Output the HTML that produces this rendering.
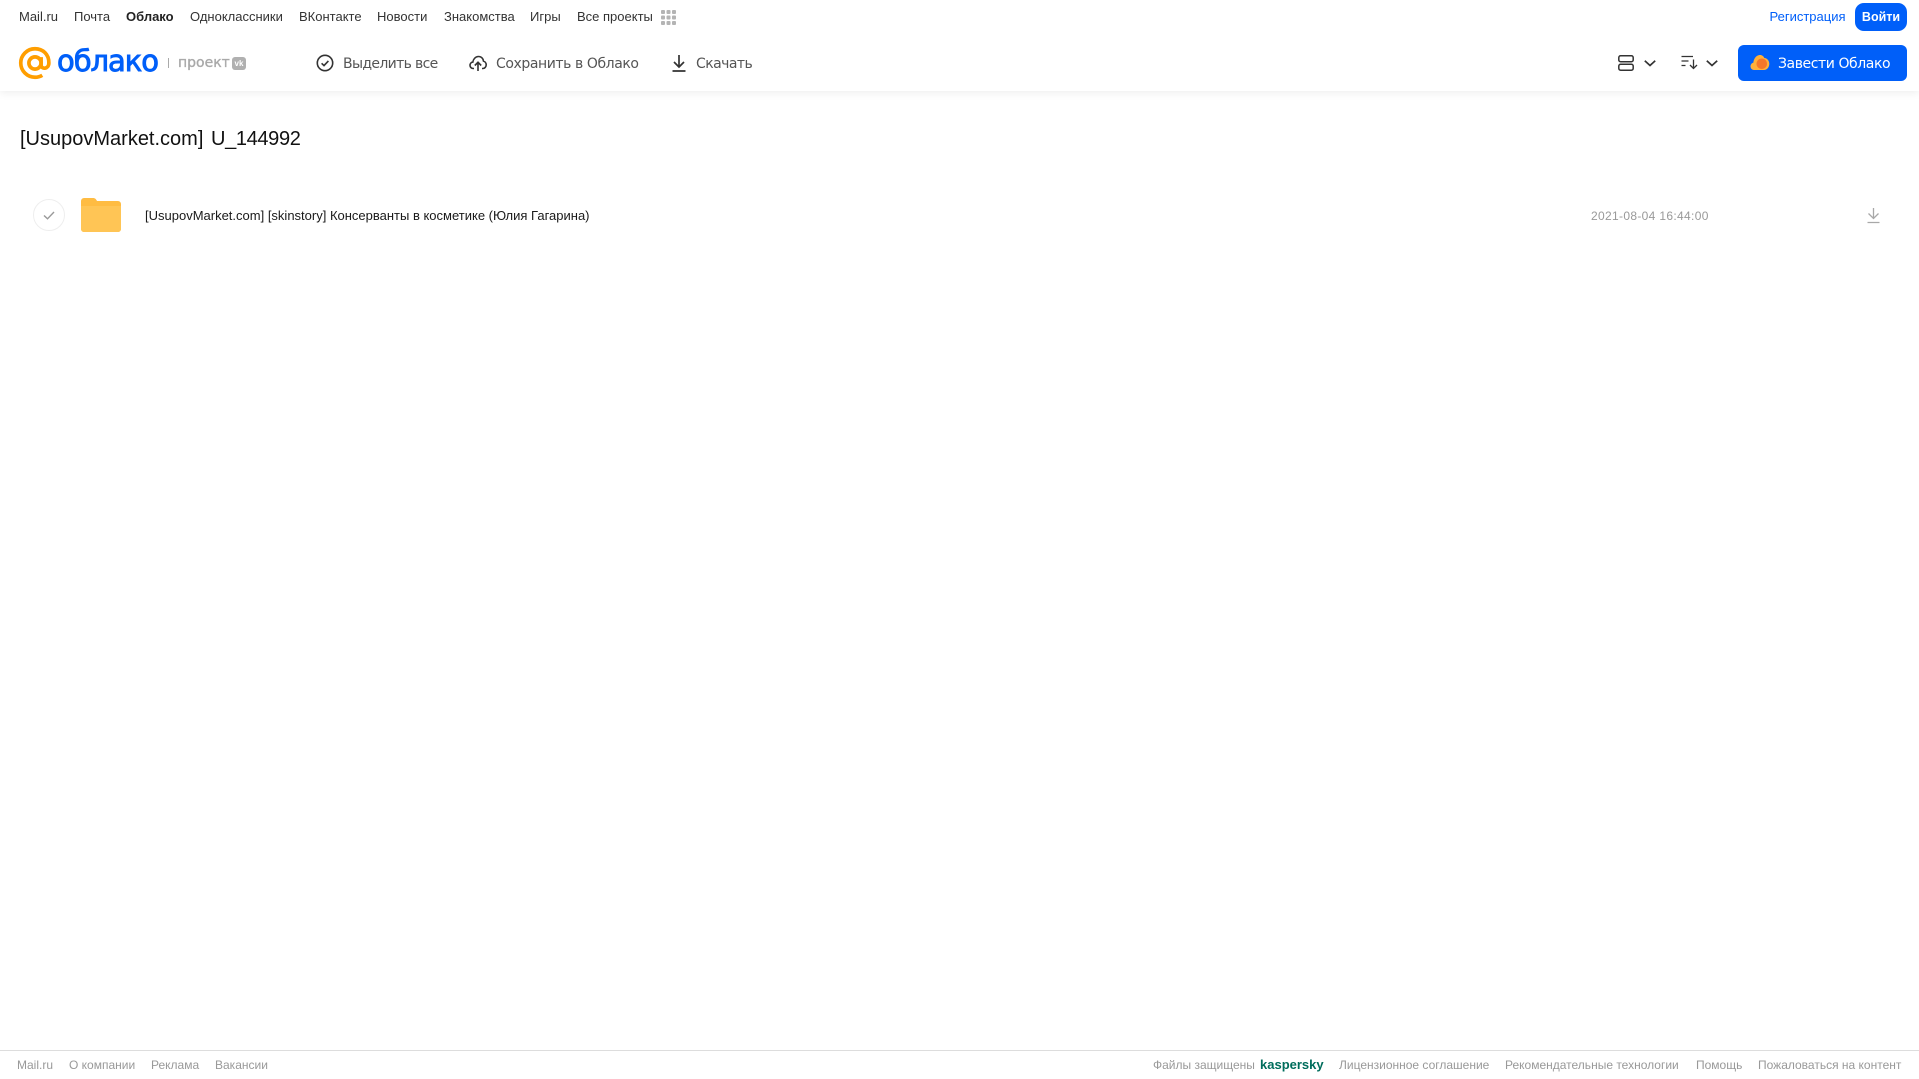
<!DOCTYPE html>
<html lang="ru"><head><meta charset="utf-8"><title>Облако</title>
<style>
html,body{margin:0;padding:0;background:#fff}
body{position:relative;width:1919px;height:1079px;overflow:hidden;font-family:"Liberation Sans",Arial,sans-serif}
.t{position:absolute;white-space:nowrap;line-height:20px;height:20px}
.n{font-size:13px;top:7px;color:#333}
.b{top:54px;color:#555;font-family:"DejaVu Sans","Liberation Sans",sans-serif;letter-spacing:-.55px;font-size:14px}
.f{font-size:12px;top:1055px;color:#999}
svg{position:absolute;overflow:visible}
</style></head><body>
<div style="position:absolute;left:0;top:0;width:1919px;height:91px;background:#fff;box-shadow:0 2px 8px rgba(0,0,0,.07)"></div>

<span class="t n" style="left:19px">Mail.ru</span>
<span class="t n" style="left:74px">Почта</span>
<span class="t n" style="left:126px;font-weight:bold;color:#222">Облако</span>
<span class="t n" style="left:190px">Одноклассники</span>
<span class="t n" style="left:299px">ВКонтакте</span>
<span class="t n" style="left:377px">Новости</span>
<span class="t n" style="left:444px">Знакомства</span>
<span class="t n" style="left:530px">Игры</span>
<span class="t n" style="left:577px">Все проекты</span>
<svg style="left:661px;top:10px" width="15" height="15" viewBox="0 0 15 15" fill="#b4b4b4"><rect x="0" y="0" width="4" height="4" rx="1"/><rect x="5.5" y="0" width="4" height="4" rx="1"/><rect x="11" y="0" width="4" height="4" rx="1"/><rect x="0" y="5.5" width="4" height="4" rx="1"/><rect x="5.5" y="5.5" width="4" height="4" rx="1"/><rect x="11" y="5.5" width="4" height="4" rx="1"/><rect x="0" y="11" width="4" height="4" rx="1"/><rect x="5.5" y="11" width="4" height="4" rx="1"/><rect x="11" y="11" width="4" height="4" rx="1"/></svg>

<span class="t n" style="left:1769.5px;color:#005ff9">Регистрация</span>
<div style="position:absolute;left:1855px;top:3px;width:52px;height:28px;border-radius:9px;background:#005ff9;color:#fff;font-size:12.5px;font-weight:bold;line-height:29px;text-align:center">Войти</div>

<!-- logo -->
<svg style="left:19px;top:47px" width="32" height="32" viewBox="0 0 33 33" fill="none" stroke="#ff9e00" stroke-width="3.8"><circle cx="16.5" cy="16.5" r="6.3"/><path d="M22.8 10.5v8.2c0 4.5 7.9 4.5 8-2.2C31 7.5 24.5 1.8 16.5 1.8 8.4 1.8 1.8 8.4 1.8 16.5s6.6 14.700 14.700 14.700c3 0 5.500-.8 7.500-2"/></svg>
<span class="t" style="left:57px;top:45px;height:32px;line-height:32px;font-size:29px;color:#005ff9;font-family:'DejaVu Sans',sans-serif;letter-spacing:-1.05px;-webkit-text-stroke:.9px #005ff9">облако</span>
<div style="position:absolute;left:168px;top:58px;width:1px;height:10px;background:#aaa"></div>
<span class="t" style="left:178px;top:53px;font-size:14px;color:#a9a9a9;font-family:'DejaVu Sans',sans-serif;-webkit-text-stroke:.35px #a9a9a9">проект</span>
<div style="position:absolute;left:232px;top:57px;width:14px;height:13px;border-radius:3px;background:#b0b0b0;color:#fff;font-size:8px;font-weight:bold;line-height:13px;text-align:center">vk</div>

<!-- toolbar -->
<svg style="left:316px;top:54px" width="18" height="18" viewBox="0 0 18 18" fill="none" stroke="#333" stroke-width="1.600"><circle cx="9" cy="9" r="7.700"/><path d="M5.600 9.300l2.400 2.300 4.400-4.700"/></svg>
<span class="t b" style="left:343px;letter-spacing:-.65px">Выделить все</span>
<svg style="left:469px;top:54px" width="18" height="18" viewBox="0 0 18 18" fill="none" stroke="#333" stroke-width="1.600"><path d="M5 14.500H4.200C2.300 14.500 1 13 1 11.300c0-1.700 1.200-3 2.800-3.200C4.200 5.300 6.400 2.500 9.500 2.500c2.800 0 4.700 2 5 4.600 1.500.4 2.700 2 2.700 3.700 0 2-1.500 3.700-3.400 3.700H13"/><path d="M9 17V8.500M5.800 11.500L9 8.300l3.200 3.200"/></svg>
<span class="t b" style="left:496px;letter-spacing:-.42px">Сохранить в Облако</span>
<svg style="left:670px;top:54px" width="18" height="18" viewBox="0 0 18 18" fill="none" stroke="#333" stroke-width="1.700"><path d="M9 1v11.500M4 8l5 5 5-5M2.500 17h13"/></svg>
<span class="t b" style="left:696px">Скачать</span>

<!-- right tools -->
<svg style="left:1618px;top:55px" width="16" height="16" viewBox="0 0 16 16" fill="none" stroke="#333" stroke-width="1.500"><rect x=".8" y=".8" width="14.400" height="6" rx="1.800"/><rect x=".8" y="9.200" width="14.400" height="6" rx="1.800"/></svg>
<svg style="left:1644px;top:60px" width="12" height="7" viewBox="0 0 12 7" fill="none" stroke="#333" stroke-width="1.700"><path d="M.8.800L6 5.500 11.200.8"/></svg>
<svg style="left:1681px;top:55px" width="17" height="15" viewBox="0 0 17 15" fill="none" stroke="#333" stroke-width="1.300"><path d="M.5 1.500h11.500M.5 6h7M.5 10.500h4M12.500 4.500v9M9 10l3.500 3.500L16 10"/></svg>
<svg style="left:1706px;top:60px" width="12" height="7" viewBox="0 0 12 7" fill="none" stroke="#333" stroke-width="1.700"><path d="M.8.800L6 5.500 11.200.8"/></svg>

<div style="position:absolute;left:1738px;top:45px;width:169px;height:36px;border-radius:6px;background:#005ff9"></div>
<svg style="left:1750px;top:54px" width="20" height="17" viewBox="0 0 20 17"><path d="M4 16C1.800 16 .5 14.300.5 12.300c0-1.800 1.200-3.300 2.800-3.600C3.700 5 6 1.500 9.300 1c2.500-.3 4.200 1 5 3 2.800.2 5 2.600 5 5.800 0 3.400-2.200 6.200-5.300 6.200z" fill="#ffb03a"/><circle cx="11.800" cy="9.800" r="5.300" fill="#f4772a"/></svg>
<span class="t b" style="left:1778px;color:#fff;letter-spacing:-.42px">Завести Облако</span>

<!-- title -->
<span class="t" style="left:20px;top:127px;height:24px;line-height:24px;font-size:20px;color:#111">[UsupovMarket.com]</span>
<span class="t" style="left:211px;top:127px;height:24px;line-height:24px;font-size:20px;color:#111;letter-spacing:-.35px">U_144992</span>

<!-- row -->
<div style="position:absolute;left:33px;top:199px;width:30px;height:30px;border:1px solid #eee;border-radius:50%"></div>
<svg style="left:43px;top:211px" width="12" height="9" viewBox="0 0 12 9" fill="none" stroke="#999" stroke-width="1.400"><path d="M1 4.500l3.500 3.300L11 1"/></svg>
<svg style="left:81px;top:198px" width="40" height="34" viewBox="0 0 40 34"><path d="M0 3a3 3 0 0 1 3-3h9c2 0 3 1 4 3h21a3 3 0 0 1 3 3v25a3 3 0 0 1-3 3H3a3 3 0 0 1-3-3z" fill="#ffbc42"/><path d="M0 8h40v23a3 3 0 0 1-3 3H3a3 3 0 0 1-3-3z" fill="#ffc555"/></svg>
<span class="t" style="left:145px;top:206px;font-size:13px;color:#1a1a1a;letter-spacing:0">[UsupovMarket.com] [skinstory] Консерванты в косметике (Юлия Гагарина)</span>
<span class="t" style="left:1591px;top:206px;font-size:12px;color:#999;letter-spacing:.33px">2021-08-04 16:44:00</span>
<svg style="left:1867px;top:207px" width="13" height="17" viewBox="0 0 13 17" fill="none" stroke="#a8a8a8" stroke-width="1.300"><path d="M6.500 1v10.500M1.500 6.500l5 5 5-5M.5 15.500h12"/></svg>

<!-- footer -->
<div style="position:absolute;left:0;top:1050px;width:1919px;height:1px;background:#ddd"></div>
<span class="t f" style="left:17px">Mail.ru</span>
<span class="t f" style="left:69px">О компании</span>
<span class="t f" style="left:151px">Реклама</span>
<span class="t f" style="left:215px">Вакансии</span>
<span class="t f" style="left:1153px">Файлы защищены</span>
<span class="t f" style="left:1260px;color:#006d5c;font-weight:bold;font-size:13px">kaspersky</span>
<span class="t f" style="left:1339px">Лицензионное соглашение</span>
<span class="t f" style="left:1505px">Рекомендательные технологии</span>
<span class="t f" style="left:1696px">Помощь</span>
<span class="t f" style="left:1758px">Пожаловаться на контент</span>
</body></html>
